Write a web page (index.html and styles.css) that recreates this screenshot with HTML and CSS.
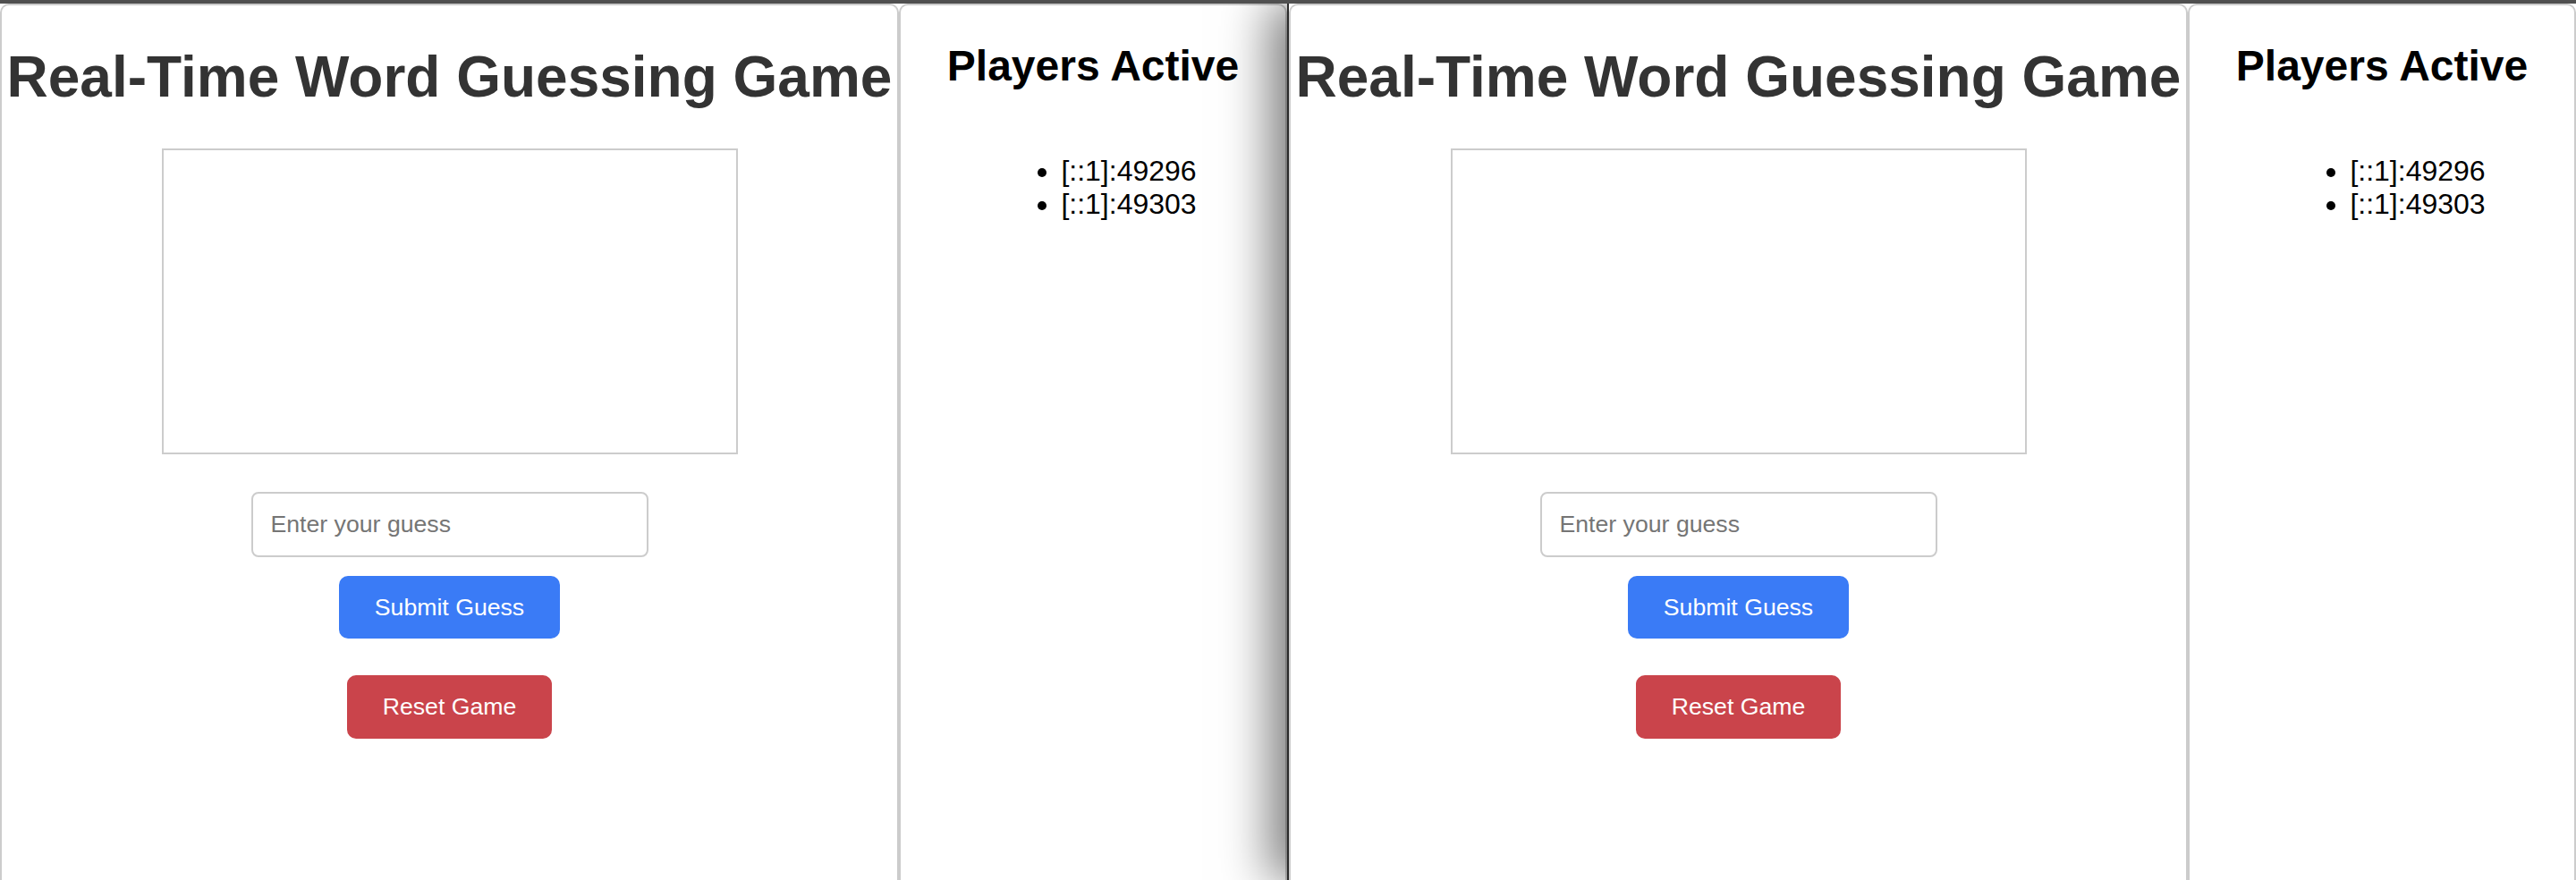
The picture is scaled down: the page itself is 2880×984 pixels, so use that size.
FILE: index.html
```html
<!DOCTYPE html>
<html lang="en">
<head>
<meta charset="utf-8">
<title>Real-Time Word Guessing Game</title>
<link rel="stylesheet" href="styles.css">
</head>
<body>
<div class="screen">
  <div class="topbar"></div>
  <div class="windows">
    <div class="window">
      <main class="game-panel">
        <h1 class="title">Real-Time Word Guessing Game</h1>
        <canvas class="board"></canvas>
        <input class="guess" type="text" placeholder="Enter your guess">
        <button class="btn btn-submit">Submit Guess</button>
        <button class="btn btn-reset">Reset Game</button>
      </main>
      <aside class="players-panel">
        <h2 class="players-title">Players Active</h2>
        <ul class="players-list">
          <li>[::1]:49296</li>
          <li>[::1]:49303</li>
        </ul>
      </aside>
    </div>
    <div class="window window-front">
      <main class="game-panel">
        <h1 class="title">Real-Time Word Guessing Game</h1>
        <canvas class="board"></canvas>
        <input class="guess" type="text" placeholder="Enter your guess">
        <button class="btn btn-submit">Submit Guess</button>
        <button class="btn btn-reset">Reset Game</button>
      </main>
      <aside class="players-panel">
        <h2 class="players-title">Players Active</h2>
        <ul class="players-list">
          <li>[::1]:49296</li>
          <li>[::1]:49303</li>
        </ul>
      </aside>
    </div>
  </div>
</div>
</body>
</html>
```

FILE: styles.css
```css
html, body {
  margin: 0;
  padding: 0;
  height: 984px;
  overflow: hidden;
  background: #ffffff;
  font-family: "Liberation Sans", Arial, sans-serif;
}

.screen {
  width: 2880px;
  height: 984px;
  display: flex;
  flex-direction: column;
}

.topbar {
  height: 4px;
  background: #505050;
  flex: none;
}

.windows {
  display: flex;
  flex: 1;
  overflow: hidden;
}

.window {
  display: flex;
  width: 1439px;
  flex: none;
  background: #ffffff;
}

.window-front {
  width: 1441px;
  box-sizing: border-box;
  border-left: 2px solid #2b2b2b;
  box-shadow: -20px 0 50px rgba(0, 0, 0, 0.5);
}

.game-panel {
  width: 1005px;
  flex: none;
  box-sizing: border-box;
  height: 1000px;
  border: 2px solid #cccccc;
  border-bottom: none;
  border-radius: 10px 10px 0 0;
  display: flex;
  flex-direction: column;
  align-items: center;
  background: #ffffff;
}

.title {
  margin: 43px 0 0;
  font-size: 64px;
  font-weight: bold;
  line-height: normal;
  color: #333333;
  white-space: nowrap;
}

.board {
  display: block;
  margin-top: 43px;
  width: 640px;
  height: 338px;
  border: 2px solid #cccccc;
  background: #ffffff;
}

.guess {
  margin-top: 42px;
  width: 444px;
  height: 73px;
  box-sizing: border-box;
  padding: 0 20px;
  border: 2px solid #cccccc;
  border-radius: 8px;
  font-family: "Liberation Sans", Arial, sans-serif;
  font-size: 26.67px;
  color: #333333;
  background: #ffffff;
  outline: none;
}

.guess::placeholder {
  color: #757575;
}

.btn {
  border: none;
  color: #ffffff;
  font-family: "Liberation Sans", Arial, sans-serif;
  font-size: 26.67px;
  padding: 0 40px;
  height: 70px;
  border-radius: 10px;
  cursor: pointer;
}

.btn-submit {
  margin-top: 21px;
  background: #3a7bf6;
}

.btn-reset {
  margin-top: 41px;
  height: 71px;
  background: #ca444b;
}

.players-panel {
  flex: 1;
  box-sizing: border-box;
  height: 1000px;
  border: 2px solid #cccccc;
  border-bottom: none;
  border-radius: 10px 10px 0 0;
  display: flex;
  flex-direction: column;
  align-items: center;
  background: #ffffff;
}

.players-title {
  margin: 40px 0 0;
  font-size: 48px;
  font-weight: bold;
  line-height: normal;
  color: #000000;
  white-space: nowrap;
}

.players-list {
  margin: 72px 0 0;
  padding-left: 80px;
  font-size: 32px;
  line-height: normal;
  color: #000000;
  text-align: left;
}
```
